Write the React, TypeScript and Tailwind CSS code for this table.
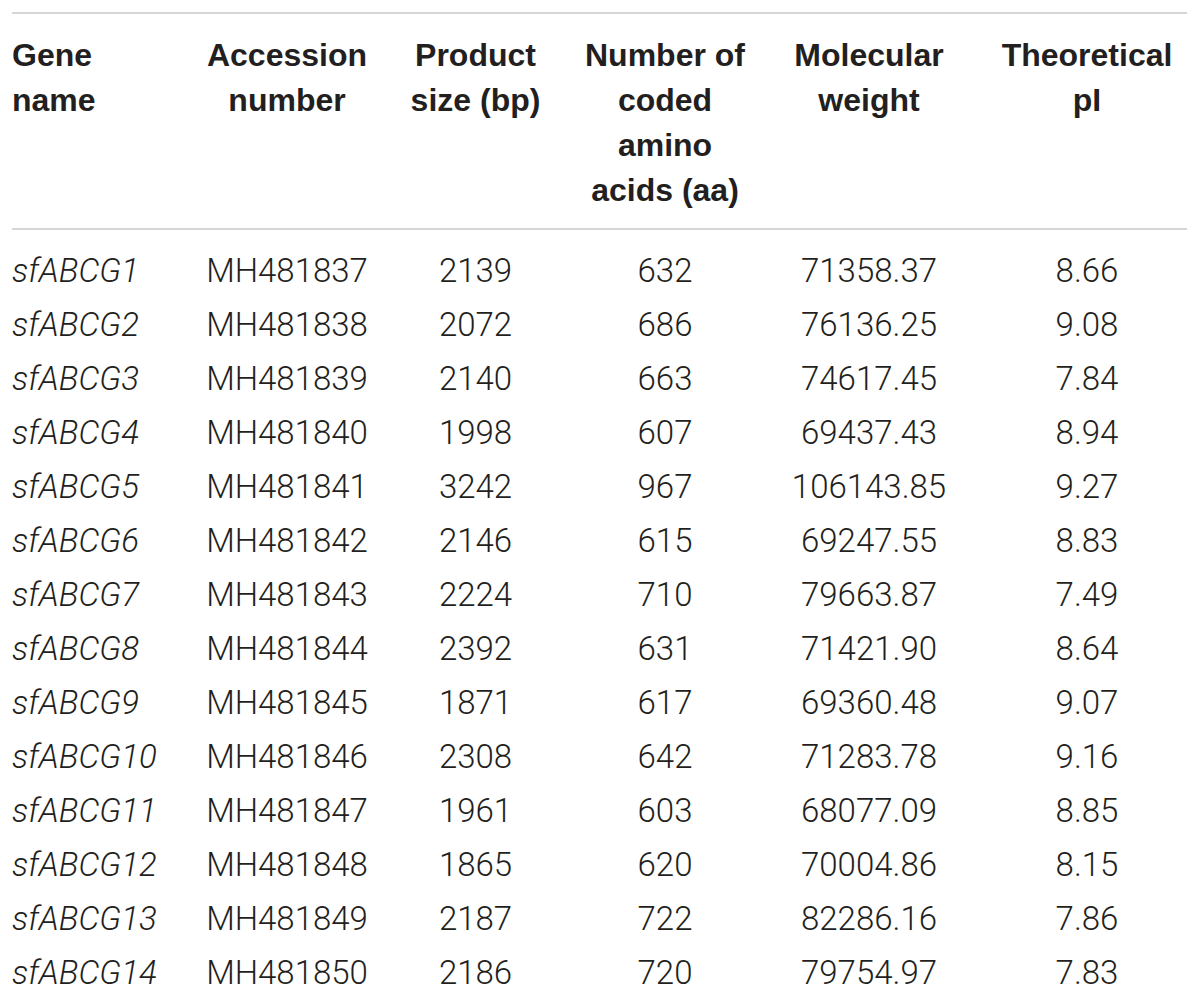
const headers: string[][] = [
  ['Gene', 'name'],
  ['Accession', 'number'],
  ['Product', 'size (bp)'],
  ['Number of', 'coded', 'amino', 'acids (aa)'],
  ['Molecular', 'weight'],
  ['Theoretical', 'pI'],
];

const rows: string[][] = [
  ['sfABCG1', 'MH481837', '2139', '632', '71358.37', '8.66'],
  ['sfABCG2', 'MH481838', '2072', '686', '76136.25', '9.08'],
  ['sfABCG3', 'MH481839', '2140', '663', '74617.45', '7.84'],
  ['sfABCG4', 'MH481840', '1998', '607', '69437.43', '8.94'],
  ['sfABCG5', 'MH481841', '3242', '967', '106143.85', '9.27'],
  ['sfABCG6', 'MH481842', '2146', '615', '69247.55', '8.83'],
  ['sfABCG7', 'MH481843', '2224', '710', '79663.87', '7.49'],
  ['sfABCG8', 'MH481844', '2392', '631', '71421.90', '8.64'],
  ['sfABCG9', 'MH481845', '1871', '617', '69360.48', '9.07'],
  ['sfABCG10', 'MH481846', '2308', '642', '71283.78', '9.16'],
  ['sfABCG11', 'MH481847', '1961', '603', '68077.09', '8.85'],
  ['sfABCG12', 'MH481848', '1865', '620', '70004.86', '8.15'],
  ['sfABCG13', 'MH481849', '2187', '722', '82286.16', '7.86'],
  ['sfABCG14', 'MH481850', '2186', '720', '79754.97', '7.83'],
];

// fixed column widths so the centres line up with the figure
const cols = ['w-[181px] text-left', 'w-[188px] text-center', 'w-[189px] text-center', 'w-[190px] text-center', 'w-[218px] text-center', 'w-[218px] text-center'];

const App = () => {
  return (
    <div className="w-[1200px] h-[998px] overflow-hidden bg-white pl-[12px] pt-[12px] text-[#231f20]">
      <div className="w-[1175px] h-[2px] bg-[#d6d6d6]" />
      <div className="flex pt-[19px] pb-[15px] font-['Liberation_Sans',Arial,sans-serif] font-bold text-[32px] leading-[45px]">
        {headers.map((lines, i) => (
          <div key={i} className={cols[i]}>
            {lines.map(l => (
              <div key={l}>{l}</div>
            ))}
          </div>
        ))}
      </div>
      <div className="w-[1175px] h-[2px] bg-[#d6d6d6]" />
      <div className="pt-[14px] font-['Roboto',Arial,sans-serif] font-light text-[33px] leading-[54px]">
        {rows.map(r => (
          <div key={r[0]} className="flex">
            {r.map((cell, i) => (
              <div key={i} className={`${cols[i]} ${i === 0 ? 'italic' : ''}`}>
                {cell}
              </div>
            ))}
          </div>
        ))}
      </div>
    </div>
  );
};

export default App;
